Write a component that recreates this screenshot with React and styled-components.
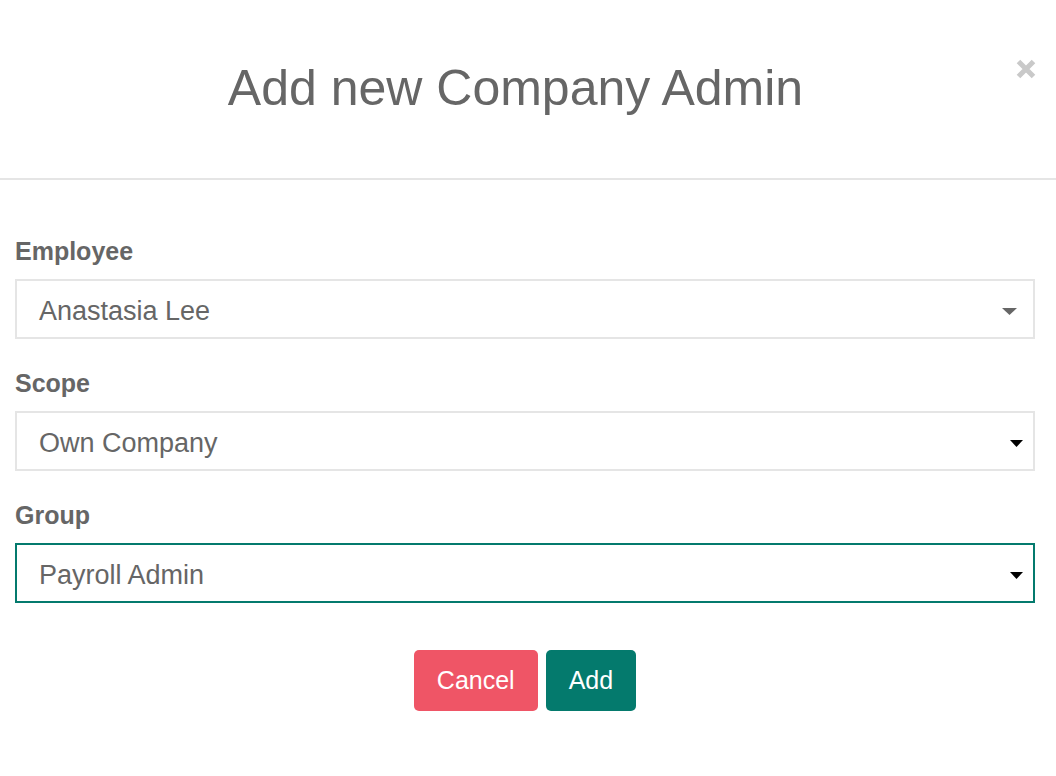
import React from "react";
import styled, { createGlobalStyle } from "styled-components";

const Global = createGlobalStyle`
  html, body { margin: 0; padding: 0; background: #fff; }
  body { font-family: "Liberation Sans", Arial, Helvetica, sans-serif; }
  * { box-sizing: border-box; }
`;

const Modal = styled.div`
  width: 1056px;
  min-height: 776px;
  background: #fff;
  display: flex;
  flex-direction: column;
`;

const Header = styled.div`
  height: 180px;
  padding: 61px 20px 0 15px;
  border-bottom: 2px solid #e5e5e5;
  display: flex;
  align-items: flex-start;
`;

const Title = styled.h1`
  flex: 1;
  margin: 0;
  text-align: center;
  font-size: 50px;
  line-height: 55px;
  font-weight: 400;
  color: #666;
`;

const Close = styled.button`
  width: 20px;
  height: 20px;
  margin-top: -2px;
  padding: 0;
  border: 0;
  background: transparent;
  display: flex;
  cursor: pointer;
`;

const Body = styled.div`
  padding: 56px 21px 0 15px;
  display: flex;
  flex-direction: column;
`;

const FieldList = styled.div`
  display: flex;
  flex-direction: column;
  gap: 29px;
`;

const Field = styled.div`
  display: flex;
  flex-direction: column;
`;

const Label = styled.label`
  font-size: 25px;
  line-height: 30px;
  font-weight: 700;
  color: #666;
  margin-bottom: 13px;
`;

const SelectBox = styled.div`
  height: 60px;
  border: 2px solid ${(p) => (p.$focused ? "#047a6d" : "#e5e5e5")};
  padding: 4px ${(p) => p.$arrowRight}px 0 22px;
  display: flex;
  align-items: center;
  justify-content: space-between;
  font-size: 27px;
  color: #666;
  background: #fff;
`;

const Actions = styled.div`
  margin-top: 47px;
  display: flex;
  justify-content: center;
  gap: 8px;
`;

const Button = styled.button`
  height: 61px;
  padding: 0 23px;
  border: 0;
  border-radius: 5px;
  background: ${(p) => p.$bg};
  color: #fff;
  font-family: "Liberation Sans", Arial, Helvetica, sans-serif;
  font-size: 25px;
  cursor: pointer;
`;

const Arrow = ({ w, h, color }) => (
  <svg width={w} height={h} viewBox={`0 0 ${w} ${h}`}>
    <polygon points={`0,0 ${w},0 ${w / 2},${h}`} fill={color} />
  </svg>
);

const fields = [
  { label: "Employee", value: "Anastasia Lee", arrow: { w: 15, h: 7, color: "#666" }, right: 16 },
  { label: "Scope", value: "Own Company", arrow: { w: 13, h: 7, color: "#000" }, right: 10 },
  { label: "Group", value: "Payroll Admin", arrow: { w: 13, h: 7, color: "#000" }, right: 10, focused: true },
];

export default function App() {
  return (
    <>
      <Global />
      <Modal>
        <Header>
          <Title>Add new Company Admin</Title>
          <Close aria-label="Close">
            <svg width="20" height="20" viewBox="0 0 20 20">
              <path d="M2.5 2.5 L17.5 17.5 M17.5 2.5 L2.5 17.5" stroke="#c9c9c9" strokeWidth="5" strokeLinecap="butt" />
            </svg>
          </Close>
        </Header>
        <Body>
          <FieldList>
            {fields.map((f) => (
              <Field key={f.label}>
                <Label>{f.label}</Label>
                <SelectBox $focused={f.focused} $arrowRight={f.right}>
                  <span>{f.value}</span>
                  <Arrow {...f.arrow} />
                </SelectBox>
              </Field>
            ))}
          </FieldList>
          <Actions>
            <Button $bg="#ef5566">Cancel</Button>
            <Button $bg="#047a6d">Add</Button>
          </Actions>
        </Body>
      </Modal>
    </>
  );
}
